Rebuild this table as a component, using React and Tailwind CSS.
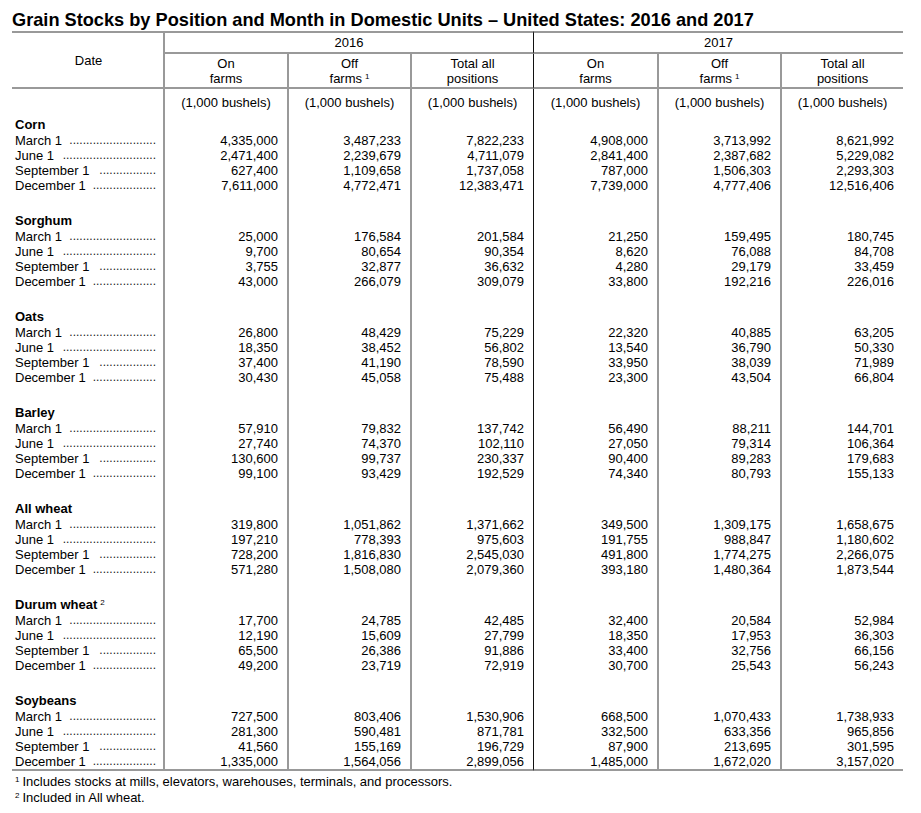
import React from "react";

const sections = [
  {
    name: "Corn",
    rows: [
      ["4,335,000", "3,487,233", "7,822,233", "4,908,000", "3,713,992", "8,621,992"],
      ["2,471,400", "2,239,679", "4,711,079", "2,841,400", "2,387,682", "5,229,082"],
      ["627,400", "1,109,658", "1,737,058", "787,000", "1,506,303", "2,293,303"],
      ["7,611,000", "4,772,471", "12,383,471", "7,739,000", "4,777,406", "12,516,406"],
    ],
  },
  {
    name: "Sorghum",
    rows: [
      ["25,000", "176,584", "201,584", "21,250", "159,495", "180,745"],
      ["9,700", "80,654", "90,354", "8,620", "76,088", "84,708"],
      ["3,755", "32,877", "36,632", "4,280", "29,179", "33,459"],
      ["43,000", "266,079", "309,079", "33,800", "192,216", "226,016"],
    ],
  },
  {
    name: "Oats",
    rows: [
      ["26,800", "48,429", "75,229", "22,320", "40,885", "63,205"],
      ["18,350", "38,452", "56,802", "13,540", "36,790", "50,330"],
      ["37,400", "41,190", "78,590", "33,950", "38,039", "71,989"],
      ["30,430", "45,058", "75,488", "23,300", "43,504", "66,804"],
    ],
  },
  {
    name: "Barley",
    rows: [
      ["57,910", "79,832", "137,742", "56,490", "88,211", "144,701"],
      ["27,740", "74,370", "102,110", "27,050", "79,314", "106,364"],
      ["130,600", "99,737", "230,337", "90,400", "89,283", "179,683"],
      ["99,100", "93,429", "192,529", "74,340", "80,793", "155,133"],
    ],
  },
  {
    name: "All wheat",
    rows: [
      ["319,800", "1,051,862", "1,371,662", "349,500", "1,309,175", "1,658,675"],
      ["197,210", "778,393", "975,603", "191,755", "988,847", "1,180,602"],
      ["728,200", "1,816,830", "2,545,030", "491,800", "1,774,275", "2,266,075"],
      ["571,280", "1,508,080", "2,079,360", "393,180", "1,480,364", "1,873,544"],
    ],
  },
  {
    name: "Durum wheat",
    note: "2",
    rows: [
      ["17,700", "24,785", "42,485", "32,400", "20,584", "52,984"],
      ["12,190", "15,609", "27,799", "18,350", "17,953", "36,303"],
      ["65,500", "26,386", "91,886", "33,400", "32,756", "66,156"],
      ["49,200", "23,719", "72,919", "30,700", "25,543", "56,243"],
    ],
  },
  {
    name: "Soybeans",
    rows: [
      ["727,500", "803,406", "1,530,906", "668,500", "1,070,433", "1,738,933"],
      ["281,300", "590,481", "871,781", "332,500", "633,356", "965,856"],
      ["41,560", "155,169", "196,729", "87,900", "213,695", "301,595"],
      ["1,335,000", "1,564,056", "2,899,056", "1,485,000", "1,672,020", "3,157,020"],
    ],
  },
];

// month label + how many leader dots follow it
const months = [
  ["March 1", 26],
  ["June 1", 28],
  ["September 1", 17],
  ["December 1", 19],
];

// left border of each of the 6 value columns; the 4th one splits the years
const colBorder = [
  "border-l-2 border-[#999]",
  "border-l-2 border-[#999]",
  "border-l-2 border-[#999]",
  "border-l border-[#111]",
  "border-l-2 border-[#999]",
  "border-l-2 border-[#999]",
];

function Label({ text, dots }) {
  return (
    <div className="flex pl-[3px] pr-[7px]">
      <span className="whitespace-nowrap">{text}</span>
      <span className="flex-1 text-right whitespace-nowrap text-[12px] text-[#222]">
        {".".repeat(dots)}
      </span>
    </div>
  );
}

function EmptyCells() {
  return colBorder.map((b, i) => <td key={i} className={b}></td>);
}

export default function App() {
  const headers = [
    ["On", "farms", false],
    ["Off", "farms", true],
    ["Total all", "positions", false],
    ["On", "farms", false],
    ["Off", "farms", true],
    ["Total all", "positions", false],
  ];

  return (
    <main className="bg-white w-[921px] h-[813px] text-black font-['Liberation_Sans',Arial,sans-serif] text-[13px] leading-[15px]">
      <h1 className="pl-[12px] pt-[9px] text-[18.2px] leading-[22px] font-bold whitespace-nowrap">
        Grain Stocks by Position and Month in Domestic Units – United States: 2016 and 2017
      </h1>

      <table className="ml-[12px] w-[891px] table-fixed border-separate border-spacing-0">
        <colgroup>
          <col className="w-[151px]" />
          <col className="w-[124px]" />
          <col className="w-[123px]" />
          <col className="w-[123px]" />
          <col className="w-[124px]" />
          <col className="w-[123px]" />
          <col className="w-[123px]" />
        </colgroup>
        <thead>
          <tr>
            <th
              rowSpan={2}
              className="font-normal align-middle text-center border-t-2 border-b-2 border-[#999] pl-[2px]"
            >
              Date
            </th>
            <th
              colSpan={3}
              className="font-normal text-center py-[2px] border-t-2 border-b-2 border-l-2 border-[#999]"
            >
              2016
            </th>
            <th
              colSpan={3}
              className="font-normal text-center py-[2px] border-t-2 border-b-2 border-[#999] border-l border-l-[#111]"
            >
              2017
            </th>
          </tr>
          <tr>
            {headers.map(([a, b, note], i) => (
              <th
                key={i}
                className={`${colBorder[i]} font-normal text-center align-middle pt-[2px] pb-[1px] border-b-2 border-b-[#999]`}
              >
                <div>{a}</div>
                <div>
                  {b}
                  {note && <sup className="text-[8px] ml-[3px]">1</sup>}
                </div>
              </th>
            ))}
          </tr>
        </thead>
        <tbody>
          <tr>
            <td></td>
            {colBorder.map((b, i) => (
              <td key={i} className={`${b} text-center pt-[6px] pb-[6px]`}>
                (1,000 bushels)
              </td>
            ))}
          </tr>
          {sections.map((s, si) => (
            <React.Fragment key={s.name}>
              {si > 0 && (
                <tr className="h-[19px]">
                  <td></td>
                  <EmptyCells />
                </tr>
              )}
              <tr className="h-[17px]">
                <td className="font-bold pl-[3px] whitespace-nowrap">
                  {s.name}
                  {s.note && <sup className="text-[8px] font-normal ml-[3px]">{s.note}</sup>}
                </td>
                <EmptyCells />
              </tr>
              {s.rows.map((r, ri) => {
                const last = si === sections.length - 1 && ri === 3;
                return (
                  <tr key={ri}>
                    <td className={last ? "border-b-2 border-[#999]" : ""}>
                      <Label text={months[ri][0]} dots={months[ri][1]} />
                    </td>
                    {r.map((v, ci) => (
                      <td
                        key={ci}
                        className={`${colBorder[ci]} text-right pr-[9px] ${last ? "border-b-2 border-b-[#999]" : ""}`}
                      >
                        {v}
                      </td>
                    ))}
                  </tr>
                );
              })}
            </React.Fragment>
          ))}
        </tbody>
      </table>

      <div className="pl-[15px] pt-[3px] leading-[16px]">
        <div>
          <sup className="text-[8px] mr-[3px]">1</sup>
          Includes stocks at mills, elevators, warehouses, terminals, and processors.
        </div>
        <div>
          <sup className="text-[8px] mr-[3px]">2</sup>
          Included in All wheat.
        </div>
      </div>
    </main>
  );
}
